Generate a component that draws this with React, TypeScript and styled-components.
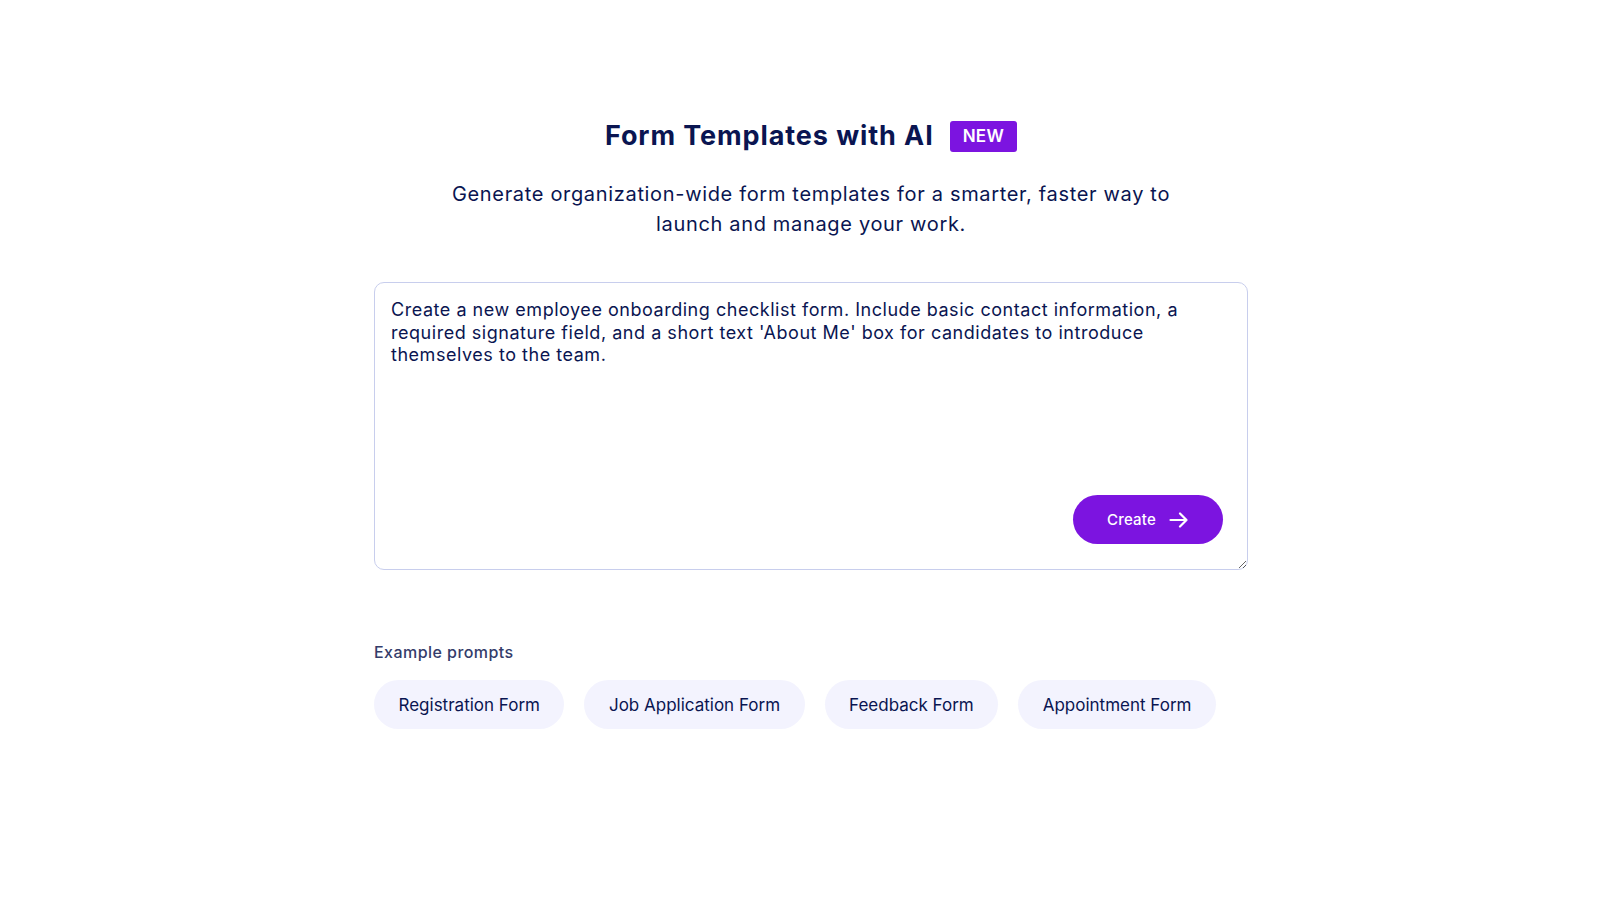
import React from "react";
import styled, { createGlobalStyle } from "styled-components";

const GlobalStyle = createGlobalStyle`
  html, body {
    margin: 0;
    padding: 0;
    background: #ffffff;
  }
  body {
    font-family: Inter, "Noto Sans", Arial, sans-serif;
    color: #0a1551;
  }
`;

const Page = styled.main`
  min-height: 900px;
  box-sizing: border-box;
  padding: 118px 0 0 22px;
  display: flex;
  flex-direction: column;
  align-items: center;
`;

const TitleRow = styled.div`
  display: flex;
  align-items: center;
  gap: 16px;
`;

const Title = styled.h1`
  margin: 0;
  font-size: 27px;
  line-height: 36px;
  font-weight: 700;
  color: #0a1551;
  letter-spacing: 0.9px;
`;

const Badge = styled.span`
  display: inline-flex;
  align-items: center;
  justify-content: center;
  height: 31px;
  padding: 0 13px;
  border-radius: 3px;
  background: #7c14e0;
  color: #ffffff;
  font-size: 17px;
  font-weight: 600;
  letter-spacing: 0.3px;
`;

const Subtitle = styled.p`
  margin: 25px 0 0;
  max-width: 740px;
  text-align: center;
  font-size: 20px;
  line-height: 30px;
  letter-spacing: 0.67px;
  color: #0a1551;
`;

const Content = styled.section`
  width: 874px;
  margin-top: 43px;
  display: flex;
  flex-direction: column;
`;

const PromptBox = styled.div`
  position: relative;
  display: flex;
`;

const PromptInput = styled.textarea`
  width: 100%;
  height: 288px;
  box-sizing: border-box;
  padding: 16px 16px 15px;
  border: 1px solid #c8ceed;
  border-radius: 10px;
  resize: vertical;
  outline: none;
  font-family: Inter, "Noto Sans", Arial, sans-serif;
  font-size: 18px;
  line-height: 22.5px;
  letter-spacing: 0.53px;
  color: #0a1551;
  background: #ffffff;
`;

const CreateButton = styled.button`
  position: absolute;
  right: 25px;
  bottom: 26px;
  height: 49px;
  width: 150px;
  display: flex;
  align-items: center;
  justify-content: center;
  gap: 13px;
  border: none;
  border-radius: 25px;
  background: #7c14e0;
  color: #ffffff;
  font-family: Inter, "Noto Sans", Arial, sans-serif;
  font-size: 15px;
  font-weight: 500;
  letter-spacing: 0.2px;
  cursor: pointer;
`;

const SectionLabel = styled.h2`
  margin: 72px 0 0;
  font-size: 16px;
  line-height: 20px;
  font-weight: 500;
  letter-spacing: 0.45px;
  color: #343c6a;
`;

const ChipRow = styled.div`
  margin-top: 18px;
  display: flex;
  gap: 20px;
`;

const Chip = styled.button`
  height: 49px;
  padding: 0 24.5px;
  border: none;
  border-radius: 25px;
  background: #f3f3fe;
  color: #0a1551;
  font-family: Inter, "Noto Sans", Arial, sans-serif;
  font-size: 17px;
  cursor: pointer;
`;

const ArrowIcon = () => (
  <svg width="20" height="16" viewBox="0 0 20 16" fill="none">
    <path
      d="M1.5 8h16M11 1.5 17.5 8 11 14.5"
      stroke="#ffffff"
      strokeWidth="2.2"
      strokeLinecap="round"
      strokeLinejoin="round"
    />
  </svg>
);

const examples = [
  "Registration Form",
  "Job Application Form",
  "Feedback Form",
  "Appointment Form",
];

const App = () => {
  return (
    <>
      <GlobalStyle />
      <Page>
        <TitleRow>
          <Title>Form Templates with AI</Title>
          <Badge>NEW</Badge>
        </TitleRow>
        <Subtitle>
          Generate organization-wide form templates for a smarter, faster way to
          launch and manage your work.
        </Subtitle>

        <Content>
          <PromptBox>
            <PromptInput
              defaultValue="Create a new employee onboarding checklist form. Include basic contact information, a required signature field, and a short text 'About Me' box for candidates to introduce themselves to the team."
            />
            <CreateButton>
              Create
              <ArrowIcon />
            </CreateButton>
          </PromptBox>

          <SectionLabel>Example prompts</SectionLabel>
          <ChipRow>
            {examples.map((label) => (
              <Chip key={label}>{label}</Chip>
            ))}
          </ChipRow>
        </Content>
      </Page>
    </>
  );
};

export default App;
